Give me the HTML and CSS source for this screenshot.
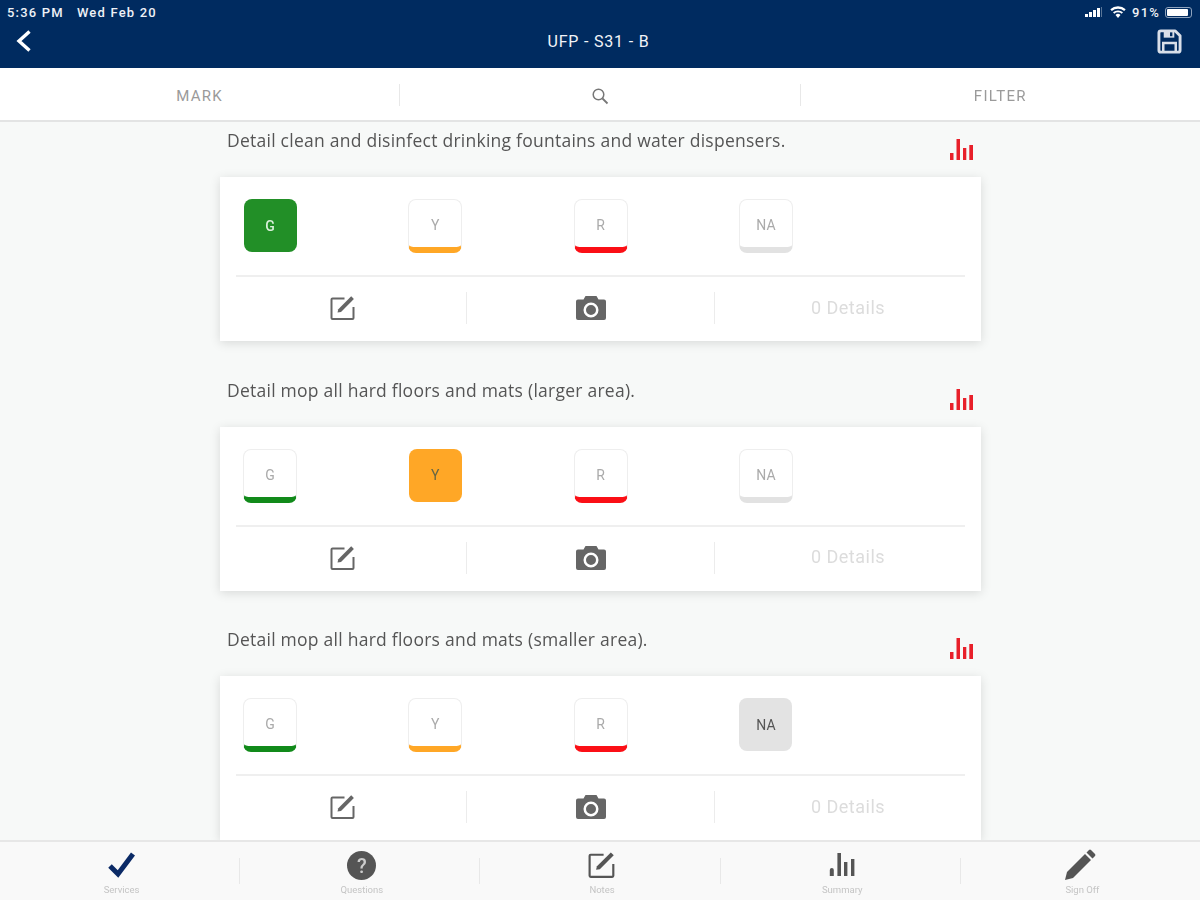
FILE: index.html
```html
<!DOCTYPE html>
<html lang="en">
<head>
<meta charset="utf-8">
<title>UFP - S31 - B</title>
<link rel="stylesheet" href="styles.css">
</head>
<body>
<svg class="defs" width="0" height="0" aria-hidden="true">
  <symbol id="edit" viewBox="0 0 26 26">
    <path d="M14.500 3.500H2.500a1 1 0 0 0-1 1V23a1 1 0 0 0 1 1H22.500a1 1 0 0 0 1-1V12" fill="none" stroke="currentColor" stroke-width="2"/>
    <path d="M7.500 17.500l.8-3.300L21.200 1.300l2.700 2.700L11 17z" fill="currentColor"/>
  </symbol>
  <symbol id="camera" viewBox="0 0 30 24">
    <path fill-rule="evenodd" fill="currentColor" d="M2 3.500h5.500l2-3.500h11l2 3.500H28a2 2 0 0 1 2 2V22a2 2 0 0 1-2 2H2a2 2 0 0 1-2-2V5.500a2 2 0 0 1 2-2zM15 6.500a7.500 7.500 0 1 0 0 15 7.500 7.500 0 0 0 0-15zM15 9a5 5 0 1 1 0 10 5 5 0 0 1 0-10z"/>
  </symbol>
  <symbol id="bars" viewBox="0 0 23 21">
    <path fill="currentColor" d="M0 14h3.500v7H0zM6.500 0h3.500v21H6.500zM13 9h3.300v12H13zM19.300 6H23v15h-3.700z"/>
  </symbol>
</svg>
<div class="app">
  <header class="top">
    <div class="status">
      <span class="clock">5:36 PM</span>
      <span class="date">Wed Feb 20</span>
      <span class="status-right">
        <svg class="signal" width="17" height="10" viewBox="0 0 17 10"><path fill="#fff" d="M0 7h3v3H0zM4 5h3v5H4zM8 3h3v7H8zM12 1h3v9h-3z"/><path fill="#fff" opacity=".35" d="M16 0h1v10h-1z"/></svg>
        <svg class="wifi" width="16" height="12" viewBox="0 0 16 12"><path fill="#fff" d="M8 12L5.500 9a3.600 3.600 0 0 1 5 0zM4.300 7.800L3 6.300a7.500 7.500 0 0 1 10 0l-1.300 1.500a5.500 5.500 0 0 0-7.400 0zM1.800 5L.3 3.300a11.500 11.500 0 0 1 15.400 0L14.200 5a9.500 9.500 0 0 0-12.400 0z"/></svg>
        <span class="pct">91%</span>
        <span class="battery"><span class="battery-fill"></span></span>
      </span>
    </div>
    <div class="nav">
      <svg class="back" width="18" height="24" viewBox="0 0 18 24"><path d="M14.500 2.500L4 12l10.500 9.500" fill="none" stroke="#fff" stroke-width="3.400"/></svg>
      <h1 class="title">UFP - S31 - B</h1>
      <svg class="save" width="25" height="25" viewBox="0 0 26 26"><path fill="none" stroke="#d9dfe9" stroke-width="3" stroke-linejoin="round" d="M2 4a2 2 0 0 1 2-2h15l5 5v15a2 2 0 0 1-2 2H4a2 2 0 0 1-2-2z"/><path fill="#d9dfe9" d="M7 2h11v7H7z"/><path fill="#002b60" d="M13.500 3.500h2.500v4h-2.500z"/><path fill="none" stroke="#d9dfe9" stroke-width="2.600" d="M6.500 23.500V14.500h13v9"/></svg>
    </div>
  </header>

  <nav class="tools">
    <span class="tool">MARK</span>
    <span class="tool-sep"></span>
    <span class="tool"><svg width="18" height="18" viewBox="0 0 18 18"><circle cx="7.500" cy="7.500" r="5.300" fill="none" stroke="#777" stroke-width="1.500"/><path d="M11.500 11.500l5 5" stroke="#777" stroke-width="1.800"/></svg></span>
    <span class="tool-sep"></span>
    <span class="tool">FILTER</span>
  </nav>

  <main class="list">
    <section class="item">
      <div class="question">
        <p class="q-text">Detail clean and disinfect drinking fountains and water dispensers.</p>
        <svg class="q-chart"><use href="#bars"/></svg>
      </div>
      <div class="card">
        <div class="marks">
          <span class="mark fill-g">G</span>
          <span class="mark y">Y</span>
          <span class="mark r">R</span>
          <span class="mark na">NA</span>
        </div>
        <div class="actions">
          <span class="action"><svg class="i-edit"><use href="#edit"/></svg></span>
          <span class="action"><svg class="i-cam"><use href="#camera"/></svg></span>
          <span class="action details">0 Details</span>
        </div>
      </div>
    </section>

    <section class="item">
      <div class="question">
        <p class="q-text">Detail mop all hard floors and mats (larger area).</p>
        <svg class="q-chart"><use href="#bars"/></svg>
      </div>
      <div class="card">
        <div class="marks">
          <span class="mark g">G</span>
          <span class="mark fill-y">Y</span>
          <span class="mark r">R</span>
          <span class="mark na">NA</span>
        </div>
        <div class="actions">
          <span class="action"><svg class="i-edit"><use href="#edit"/></svg></span>
          <span class="action"><svg class="i-cam"><use href="#camera"/></svg></span>
          <span class="action details">0 Details</span>
        </div>
      </div>
    </section>

    <section class="item">
      <div class="question">
        <p class="q-text">Detail mop all hard floors and mats (smaller area).</p>
        <svg class="q-chart"><use href="#bars"/></svg>
      </div>
      <div class="card">
        <div class="marks">
          <span class="mark g">G</span>
          <span class="mark y">Y</span>
          <span class="mark r">R</span>
          <span class="mark fill-na">NA</span>
        </div>
        <div class="actions">
          <span class="action"><svg class="i-edit"><use href="#edit"/></svg></span>
          <span class="action"><svg class="i-cam"><use href="#camera"/></svg></span>
          <span class="action details">0 Details</span>
        </div>
      </div>
    </section>
  </main>

  <footer class="tabs">
    <div class="tab">
      <svg class="tab-icon raise-4 navy" width="30" height="28" viewBox="0 0 30 28"><path d="M3 15l8 8L26 3" fill="none" stroke="currentColor" stroke-width="5"/></svg>
      <span class="tab-label">Services</span>
    </div>
    <span class="tab-sep"></span>
    <div class="tab">
      <span class="help">?</span>
      <span class="tab-label">Questions</span>
    </div>
    <span class="tab-sep"></span>
    <div class="tab">
      <svg class="tab-icon raise-5" width="28" height="28"><use href="#edit"/></svg>
      <span class="tab-label">Notes</span>
    </div>
    <span class="tab-sep"></span>
    <div class="tab">
      <svg class="tab-icon raise-6" width="26" height="24" viewBox="0 0 26 24"><path fill="currentColor" d="M.8 17a2 2 0 0 1 4 0v6h-4zM8.400 0h3.600v23H8.400zM15 9h3.400v14H15zM22 6h3.400v17H22z"/></svg>
      <span class="tab-label">Summary</span>
    </div>
    <span class="tab-sep"></span>
    <div class="tab">
      <svg class="tab-icon raise-3 pencil" width="32" height="32" viewBox="0 0 32 32"><path fill="currentColor" d="M1 31l2-8L21 5l6 6L9 29zM22.500 3.500L25 1a1.500 1.500 0 0 1 2 0l4 4a1.500 1.500 0 0 1 0 2l-2.500 2.500z"/></svg>
      <span class="tab-label">Sign Off</span>
    </div>
  </footer>
</div>
</body>
</html>
```

FILE: styles.css
```css
* { box-sizing: border-box; }
html, body { margin: 0; padding: 0; }
body { font-family: Roboto, "Liberation Sans", sans-serif; background: #f7f9f8; }
.defs { display: block; height: 0; width: 0; }

.app {
  width: 1200px;
  height: 900px;
  display: flex;
  flex-direction: column;
  overflow: hidden;
  filter: blur(0.6px);
}

/* header */
.top { background: #002b60; color: #fff; height: 68px; flex: none; }
.status {
  height: 24px;
  display: flex;
  align-items: center;
  padding: 0 8px 0 7px;
  font-size: 13px;
  letter-spacing: 1.200px;
  font-weight: 500;
  color: #eef1f6;
}
.date { margin-left: 13px; }
.status-right { margin-left: auto; display: flex; align-items: center; }
.wifi { margin-left: 8px; }
.pct { margin-left: 6px; }
.battery {
  margin-left: 5px;
  width: 27px;
  height: 11px;
  border: 1px solid #8fa3bd;
  border-radius: 3px;
  padding: 1px;
  display: flex;
}
.battery-fill { flex: 1; background: #fff; border-radius: 1px; margin-right: 2px; }
.nav {
  height: 34px;
  display: grid;
  grid-template-columns: 1fr auto 1fr;
  align-items: center;
  padding: 0 18px 0 15px;
}
.title { margin: 0; font-size: 16px; letter-spacing: 0.8px; font-weight: 400; color: #f2f4f8; }
.save { justify-self: end; }

/* toolbar */
.tools {
  height: 54px;
  flex: none;
  background: #fff;
  border-bottom: 2px solid #e3e4e4;
  display: flex;
  align-items: center;
}
.tool {
  flex: 1;
  display: flex;
  justify-content: center;
  align-items: center;
  padding-top: 3px;
  font-size: 15px;
  letter-spacing: 1.300px;
  color: #9a9a9a;
}
.tool-sep { width: 1px; height: 22px; margin-top: 2px; background: #e8e8e8; }

/* list */
.list { flex: 1; min-height: 0; overflow: hidden; }
.item { width: 761px; margin: 0 0 30.500px 220px; }
.question { height: 55px; display: flex; justify-content: space-between; padding: 8px 8px 0 7px; }
.q-text { margin: 0; font-family: "Open Sans", Roboto, sans-serif; font-size: 17.500px; letter-spacing: 0.25px; line-height: 20px; color: #555; }
.q-chart { width: 23px; height: 21px; margin-top: 9px; color: #e8202a; }
.card { height: 164px; background: #fff; box-shadow: 0 2px 10px rgba(0, 0, 0, 0.13); }
.marks {
  height: 100px;
  margin: 0 16px;
  padding: 22px 0 0 7px;
  border-bottom: 2px solid #efefef;
  display: flex;
  gap: 111.300px;
}
.mark {
  width: 54px;
  height: 54px;
  flex: none;
  border: 1px solid #eeeeee;
  border-bottom-width: 6px;
  border-radius: 8px;
  display: flex;
  align-items: center;
  justify-content: center;
  padding-top: 3px;
  font-size: 14px;
  color: #aaa;
  background: #fff;
}
.g { border-bottom-color: #118a1a; }
.y { border-bottom-color: #ffa726; }
.r { border-bottom-color: #fb0f16; }
.na { border-bottom-color: #e2e2e2; }
.fill-g, .fill-y, .fill-na { width: 53px; height: 53px; margin: 0 0.500px; border: 0; padding-top: 0; }
.fill-g { background: #228f27; color: #d9f0da; font-weight: 500; }
.fill-y { background: #ffa726; color: #664; }
.fill-na { background: #e3e3e3; color: #555; }

.actions {
  height: 62px;
  display: grid;
  grid-template-columns: 246px 248px 1fr;
  align-items: center;
}
.action {
  height: 32px;
  display: flex;
  align-items: center;
  justify-content: center;
  border-left: 1px solid #ececec;
  color: #666;
}
.action:first-child { border-left: 0; }
.i-edit { width: 26px; height: 26px; }
.i-cam { width: 30px; height: 24px; }
.details { font-size: 18px; letter-spacing: 0.5px; color: #dcdcdc; padding-bottom: 2px; }

/* tab bar */
.tabs {
  height: 60px;
  flex: none;
  background: #f9f9f9;
  border-top: 2px solid #e7e7e7;
  display: flex;
  align-items: center;
}
.tab {
  flex: 1;
  height: 58px;
  display: flex;
  flex-direction: column;
  align-items: center;
  justify-content: flex-end;
  padding: 0 0 5px 4px;
  color: #555;
}
.tab-icon { flex: none; }
.raise-3 { margin-bottom: 3px; }
.raise-4 { margin-bottom: 5px; }
.raise-5 { margin-bottom: 5px; }
.raise-6 { margin-bottom: 7px; }
.pencil { margin-right: 4px; }
.navy { color: #0b2a66; }
.help {
  width: 29px;
  height: 29px;
  margin-bottom: 4px;
  border-radius: 50%;
  background: #555;
  color: #ccc;
  font-size: 20px;
  font-weight: 500;
  display: flex;
  align-items: center;
  justify-content: center;
}
.tab-label { font-size: 9.500px; line-height: 11px; color: #c4c4c4; }
.tab-sep { width: 1px; height: 26px; background: #e8e8e8; }
```
